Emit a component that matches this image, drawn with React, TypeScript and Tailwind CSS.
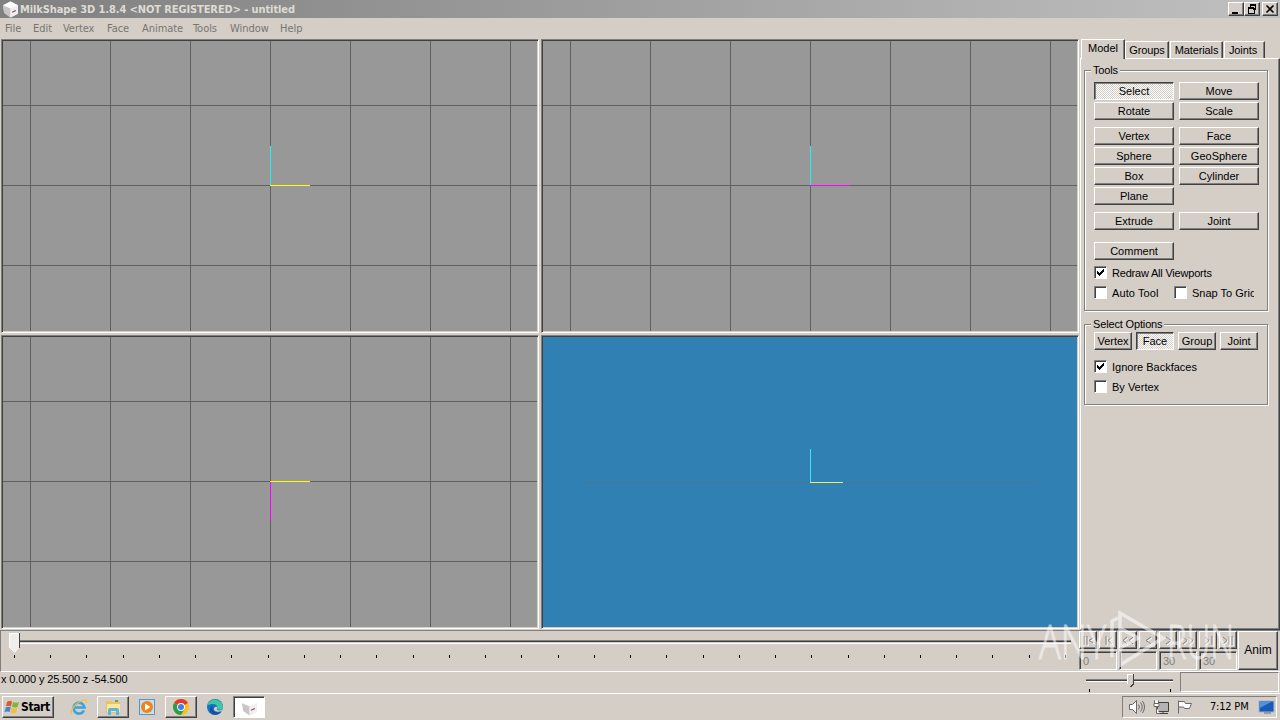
import type { ReactNode } from "react";
import clsx from "clsx";

const RAISED =
  "bg-[#d4cec7] border border-t-white border-l-white border-r-[#404040] border-b-[#404040] shadow-[inset_-1px_-1px_0_#808080]";
const PRESSED =
  "border border-t-[#404040] border-l-[#404040] border-r-white border-b-white shadow-[inset_1px_1px_0_#808080] bg-[repeating-conic-gradient(#ffffff_0_25%,#d4cec7_0_50%)] bg-[length:2px_2px]";
const SUNKEN =
  "border border-t-[#808080] border-l-[#808080] border-r-white border-b-white shadow-[inset_1px_1px_0_#404040]";

const MENUS = [
  { label: "File", width: "w-[28px]" },
  { label: "Edit", width: "w-[30px]" },
  { label: "Vertex", width: "w-[44px]" },
  { label: "Face", width: "w-[35px]" },
  { label: "Animate", width: "w-[51px]" },
  { label: "Tools", width: "w-[37px]" },
  { label: "Window", width: "w-[50px]" },
  { label: "Help", width: "w-[30px]" },
];

const TICKS = Array.from({ length: 30 }, (_, i) => Math.round(14 + i * 36.24));

interface ButtonProps {
  children: ReactNode;
  active?: boolean;
  className?: string;
}

function Button({ children, active, className }: ButtonProps) {
  return (
    <button
      className={clsx(
        "h-[18px] flex items-center justify-center leading-none whitespace-nowrap",
        active ? PRESSED : RAISED,
        className ?? "w-20"
      )}
    >
      {children}
    </button>
  );
}

function Checkbox({ label, checked, className }: { label: string; checked?: boolean; className?: string }) {
  return (
    <label className={clsx("h-[13px] flex items-center gap-[5px] whitespace-nowrap leading-[13px]", className)}>
      <span className={clsx("w-[13px] h-[13px] shrink-0 bg-white", SUNKEN)}>
        {checked && (
          <svg width="11" height="11" className="block" shapeRendering="crispEdges">
            <path d="M2 4v3M3 5v3M4 6v3M5 5v3M6 4v3M7 3v3M8 2v3" stroke="#000" transform="translate(.5 0)" />
          </svg>
        )}
      </span>
      <span className="overflow-hidden mt-[2px]">{label}</span>
    </label>
  );
}

function Group({ title, className, children }: { title: string; className: string; children: ReactNode }) {
  return (
    <section
      className={clsx(
        "relative w-[184px] border border-[#808080] shadow-[1px_1px_0_#fff,inset_1px_1px_0_#fff] pl-[9px]",
        className
      )}
    >
      <span className="absolute left-[6px] top-[-7px] bg-[#d4cec7] px-[2px] leading-[13px] tracking-[-0.15px]">
        {title}
      </span>
      {children}
    </section>
  );
}

interface ViewportProps {
  vx: number;
  hy: number;
  up?: string;
  down?: string;
  right: string;
}

// Orthographic view: 80px grid with the axis cross on the middle lines
function Viewport({ vx, hy, up, down, right }: ViewportProps) {
  const cols = [0, 1, 2, 3, 4, 5, 6].map((i) => vx - 240 + i * 80);
  const rows = [-80, 0, 80].map((d) => hy + d);
  return (
    <div className={clsx("p-px", SUNKEN)}>
      <svg width="534" height="290" className="block bg-[#989898]" shapeRendering="crispEdges">
        {cols.map((x) => (
          <rect key={x} x={x} y="0" width="1" height="290" fill="#606060" />
        ))}
        {rows.map((y) => (
          <rect key={y} x="0" y={y} width="534" height="1" fill="#606060" />
        ))}
        {up && <rect x={vx} y={hy - 39} width="1" height="40" fill={up} />}
        {down && <rect x={vx} y={hy} width="1" height="40" fill={down} />}
        <rect x={vx} y={hy} width="40" height="1" fill={right} />
      </svg>
    </div>
  );
}

function Cube({ size }: { size: number }) {
  return (
    <svg width={size} height={size} viewBox="0 0 16 16">
      <path d="M1 4 8 .5 15 4v8l-7 3.500L2 11z" fill="#eee" />
      <path d="M1 4 8 .5 15 4 8 7z" fill="#fff" />
      <path d="M1 4 8 7v8.500L2 11z" fill="#c9c4c6" />
      <path d="M8 7l7-3v8l-7 3.500z" fill="#f4edf0" />
      <path d="M9.500 10.500 13 9" stroke="#66505a" />
    </svg>
  );
}

function TitleBar() {
  return (
    <header className="h-[18px] flex items-center pl-[2px] pr-[2px] bg-linear-to-r from-[#808080] to-[#c0c0c0]">
      <Cube size={17} />
      <h1 className="flex-1 pl-px pt-px font-['DejaVu_Sans_Condensed'] font-bold text-[11px] leading-[18px] tracking-[-0.1px] text-[#dedbd5] whitespace-nowrap">
        MilkShape 3D 1.8.4 &lt;NOT REGISTERED&gt; - untitled
      </h1>
      <div className="flex">
        <Button className="w-4 h-[14px]!">
          <svg width="12" height="12" shapeRendering="crispEdges">
            <rect x="2" y="9" width="6" height="2" />
          </svg>
        </Button>
        <Button className="w-4 h-[14px]! mr-[2px]">
          <svg width="12" height="12" fill="none" stroke="#000" shapeRendering="crispEdges">
            <path d="M4 1.500h6M4.500 1v4M9.500 1v6M7 6.500h3M4 2.500h6M2 5.500h6v5h-5.500v-5M2 4.500h6" />
          </svg>
        </Button>
        <Button className="w-4 h-[14px]!">
          <svg width="12" height="12">
            <path d="M2.500 2.500l7 7M9.500 2.500l-7 7" stroke="#000" strokeWidth="1.600" />
          </svg>
        </Button>
      </div>
    </header>
  );
}

function Panel() {
  const tab =
    "h-[17px] border-t border-l border-t-white border-l-white border-r border-r-[#404040] shadow-[inset_-1px_0_0_#808080] text-center leading-[17px] tracking-[-0.1px]";
  return (
    <aside className="w-[200px] h-[591px] ml-px flex flex-col">
      <nav className="flex items-end h-[19px] pl-px">
        <div className="relative z-10 w-[44px] h-5 -mb-px bg-[#d4cec7] border-t border-l border-white border-r border-r-[#404040] shadow-[inset_-1px_0_0_#808080] text-center leading-[17px]">
          Model
        </div>
        <div className={clsx(tab, "w-[44px]")}>Groups</div>
        <div className={clsx(tab, "w-[53px] ml-px")}>Materials</div>
        <div className={clsx(tab, "w-[41px] ml-px pr-[3px]")}>Joints</div>
      </nav>
      <div className="flex-1 border border-white border-r-[#404040] border-b-[#404040] shadow-[inset_-1px_-1px_0_#808080] pt-[11px] pl-[3px]">
        <Group title="Tools" className="h-[241px] pt-[11px]">
          <div className="grid grid-cols-[80px_80px] gap-x-[5px] gap-y-[2px]">
            <Button active>Select</Button>
            <Button>Move</Button>
            <Button>Rotate</Button>
            <Button>Scale</Button>
          </div>
          <div className="grid grid-cols-[80px_80px] gap-x-[5px] gap-y-[2px] mt-[7px]">
            <Button>Vertex</Button>
            <Button>Face</Button>
            <Button>Sphere</Button>
            <Button>GeoSphere</Button>
            <Button>Box</Button>
            <Button>Cylinder</Button>
            <Button>Plane</Button>
          </div>
          <div className="flex gap-[5px] mt-[7px]">
            <Button>Extrude</Button>
            <Button>Joint</Button>
          </div>
          <div className="mt-3">
            <Button>Comment</Button>
          </div>
          <Checkbox label="Redraw All Viewports" checked className="mt-[6px] tracking-[-0.2px]" />
          <div className="flex mt-[7px]">
            <Checkbox label="Auto Tool" className="w-20 tracking-[0.1px]" />
            <Checkbox label="Snap To Gric" className="w-20" />
          </div>
        </Group>
        <Group title="Select Options" className="h-[81px] mt-[13px] pt-[7px]">
          <div className="flex gap-1">
            <Button className="w-[38px]">Vertex</Button>
            <Button active className="w-[38px]">Face</Button>
            <Button className="w-[38px]">Group</Button>
            <Button className="w-[38px]">Joint</Button>
          </div>
          <Checkbox label="Ignore Backfaces" checked className="mt-[10px]" />
          <Checkbox label="By Vertex" className="mt-[7px]" />
        </Group>
      </div>
    </aside>
  );
}

function Timeline() {
  const playback = [
    "M4 3v9M7 3v9M13 5l-4 2.500 4 2.500",
    "M6 3v9M12 4L8 7.500l4 3.500",
    "M7 4L3 7.500 7 11M13 4L9 7.500l4 3.500",
    "M11 4L6 7.500l5 3.500",
    "M6 4l5 3.500L6 11",
    "M3 4l4 3.500L3 11M9 4l4 3.500L9 11",
    "M5 4l4 3.500L5 11M12 3v9",
    "M3 4l4 3.500L3 11M9 3v9M12 3v9",
  ];
  return (
    <div className="h-[42px] flex border-t border-l border-[#808080] border-b border-b-white">
      <svg width="1078" height="40" shapeRendering="crispEdges">
        <g transform="translate(-1 -631)">
          <rect x="12" y="640" width="1059" height="1" fill="#808080" />
          <rect x="12" y="641" width="1059" height="1" fill="#404040" />
          <rect x="12" y="643" width="1059" height="1" fill="#fff" />
          {TICKS.map((x) => (
            <rect key={x} x={x} y="655" width="1" height="3" />
          ))}
          <path d="M9 633h10v15l-5 5-5-5z" fill="#f0eeea" />
          <path d="M9.500 648v-14.500h10" stroke="#fff" fill="none" />
          <path d="M19.500 633v15" stroke="#404040" fill="none" />
        </g>
      </svg>
      <div className="w-[158px]">
        <div className="flex gap-[2px]">
          {playback.map((d) => (
            <Button key={d} className="w-[18px] shrink-0">
              <svg width="16" height="15">
                <path d={d} transform="translate(1 1)" stroke="#fff" fill="none" />
                <path d={d} stroke="#808080" fill="none" />
              </svg>
            </Button>
          ))}
        </div>
        <div className="flex gap-[2px] mt-[2px] text-[#808080]">
          {["0", "", "30", "30"].map((value, i) => (
            <div key={i} className={clsx("w-[38px] h-[19px] pl-[3px] leading-[18px]", SUNKEN)}>
              {value}
            </div>
          ))}
        </div>
      </div>
      <Button className="w-10 h-[39px]! ml-px text-[12px] pb-px">Anim</Button>
    </div>
  );
}

function StatusBar() {
  return (
    <div className="h-[21px] flex">
      <p className="w-[1079px] pl-px leading-[14px] tracking-[-0.15px]">x 0.000 y 25.500 z -54.500</p>
      <svg width="101" height="21" shapeRendering="crispEdges">
        <rect x="7" y="7" width="87" height="1" fill="#808080" />
        <rect x="7" y="8" width="87" height="1" fill="#404040" />
        <rect x="7" y="9" width="87" height="1" fill="#fff" />
        <path d="M48 2h6v10l-3 3-3-3z" fill="#d4cec7" />
        <path d="M48.500 12V2.500h5" stroke="#fff" fill="none" />
        <path d="M54.500 2v10l-3 3" stroke="#404040" fill="none" />
        <rect x="10" y="17" width="1" height="3" />
        <rect x="91" y="17" width="1" height="3" />
      </svg>
      <div className="w-[99px] h-[20px] border border-[#808080] border-r-white border-b-white" />
    </div>
  );
}

function TaskBar() {
  const slot = "w-8 h-[22px] flex items-center justify-center";
  return (
    <footer className="h-[27px] border-t border-white pt-[2px] pl-[2px] pr-[3px] flex">
      <div className={clsx("w-[52px] h-[22px] flex items-center pl-px", RAISED)}>
        <svg width="17" height="18" viewBox="0 0 17 18">
          <path d="M3 4q3-2 5-.5L7 8.500Q5 7 2 8.500z" fill="#e2562c" />
          <path d="M9 4q3 1.500 6 0l-1.500 5Q11 10 8 8.700z" fill="#78b83c" />
          <path d="M1.800 9.500q3-1.500 5-.2L5.500 14Q3.500 12.800.5 14z" fill="#3d86d0" />
          <path d="M7.800 9.800q3 1.200 5.500 0L12 14.500q-3 1-5.500 0z" fill="#f5bf2c" />
        </svg>
        <span className="font-['DejaVu_Sans_Condensed'] font-bold text-[12px] leading-none tracking-[-0.4px]">Start</span>
      </div>
      <div className={clsx(slot, "ml-[9px]")}>
        <svg width="18" height="18" viewBox="0 0 18 18" fill="none">
          <path d="M14 12.500A5.500 5.500 0 1 1 14.500 9.500H5" stroke="#3aa3e3" strokeWidth="2.600" />
          <path d="M2 16C-1 13 6 5 12 2.500c4-1.500 5 0 4 2.500" stroke="#efc33c" strokeWidth="1.300" />
        </svg>
      </div>
      <div className={clsx(slot, "ml-[2px]", RAISED)}>
        <svg width="18" height="18" viewBox="0 0 18 18">
          <path d="M2 3h5l1 1h8v11H2z" fill="#e7c565" />
          <path d="M3 6h13v8H3z" fill="#f7e7a0" />
          <path d="M4 17v-5q0-2 2-2h7q2 0 2 2v5h-3v-4H7v4z" fill="#5fb4df" />
          <rect x="11" y="2" width="3" height="2" fill="#57a857" />
        </svg>
      </div>
      <div className={clsx(slot, "ml-[2px]")}>
        <svg width="17" height="17" viewBox="0 0 17 17">
          <rect x=".5" y=".5" width="15" height="15" fill="#c5dff2" stroke="#5b95c8" />
          <circle cx="8" cy="8" r="6" fill="#f08418" />
          <path d="M6 4.500 11.500 8 6 11.500z" fill="#fff" />
        </svg>
      </div>
      <div className={clsx(slot, "ml-[2px]", RAISED)}>
        <svg width="16" height="16" viewBox="0 0 16 16">
          <circle cx="8" cy="8" r="8" fill="#fbc116" />
          <path d="M8 8 1.070 4A8 8 0 0 1 14.930 4z" fill="#e33b2e" />
          <path d="M8 8 1.070 4A8 8 0 0 0 8 16l3.500-6z" fill="#2a9f4b" />
          <circle cx="8" cy="8" r="3.900" fill="#fff" />
          <circle cx="8" cy="8" r="3" fill="#3f7fe8" />
        </svg>
      </div>
      <div className={clsx(slot, "ml-[2px]")}>
        <svg width="16" height="16" viewBox="0 0 16 16">
          <circle cx="8" cy="8" r="8" fill="#1473c4" />
          <path d="M.3 6.500A8 8 0 0 1 16 8c0 3-4 3.500-6 2 2-4-3-7-9.700-3.500z" fill="#3fc6a4" />
          <path d="M6 7c-2 4 2 8 8 6-3 4-10 3.500-11-1-.5-3 1-5 3-5z" fill="#1c4f9e" />
          <path d="M8 8q2-1 2.300.7c0 1.200-1.300 1.300-.3 2 2 1.300 5 .8 6-1.200L15 12q-6 2-8-1-.5-2 1-3z" fill="#d4cec7" />
        </svg>
      </div>
      <div className={clsx(slot, "ml-[2px] bg-white", SUNKEN)}>
        <Cube size={17} />
      </div>
      <div className="ml-auto w-[155px] h-[22px] border border-[#808080] border-r-white border-b-white flex items-center pl-[5px]">
        <svg width="66" height="18" fill="#fff" stroke="#686868" className="shrink-0">
          <path d="M1.500 6.500h3l4-4v13l-4-4h-3z" />
          <path d="M10.500 6.500q2 2.500 0 5M12.500 4.500q3.500 4.500 0 9M14.500 3q4 6 0 12" fill="none" />
          <path d="M29.500 4.500h11v9h-11zM30 15.500h10M35 13v2" fill="#b4b4b4" stroke="#404040" />
          <path d="M26.500 2.500v3h4v-3M26 5.500h5v3h-5zM28.500 9v6.500h3" />
          <path d="M50.500 2.500v13M50.500 3.500h6l1 2h6l-2 5h-5l-1-1.500h-5" />
        </svg>
        <time className="ml-[16px] font-['DejaVu_Sans_Condensed'] text-[11px] tracking-[-0.2px] whitespace-nowrap">7:12 PM</time>
        <svg width="17" height="14" className="ml-auto mr-px shrink-0">
          <rect x="1" y="1" width="15" height="11" fill="#1c59b4" stroke="#9fb7cf" />
          <path d="M2 2h11L2 8z" fill="#4f93dd" />
          <path d="M6 13h7" stroke="#56708c" />
        </svg>
      </div>
    </footer>
  );
}

function Watermark() {
  return (
    <svg width="200" height="64" className="absolute left-[1036px] top-[606px] pointer-events-none opacity-55">
      <g fill="#fff" stroke="#fff" strokeWidth="1" fontFamily="'Open Sans', sans-serif" fontWeight="300" fontSize="48">
        <text x="3" y="53" textLength="67" lengthAdjust="spacingAndGlyphs">ANY</text>
        <text x="131" y="53" textLength="67" lengthAdjust="spacingAndGlyphs">RUN</text>
      </g>
      <path d="M76 51V15l6-3M84 7l43 25-43 27V42l18-10-18-10zM84 22v20" fill="none" stroke="#fff" strokeWidth="3.500" />
    </svg>
  );
}

export default function App() {
  return (
    <div className="relative w-[1280px] h-[720px] overflow-hidden bg-[#d4cec7] text-black text-[11px] font-['Liberation_Sans',sans-serif]">
      <TitleBar />
      <nav className="h-[21px] pl-[5px] flex font-['DejaVu_Sans_Condensed'] leading-[22px] text-[#777570] tracking-[-0.05px]">
        {MENUS.map((menu) => (
          <span key={menu.label} className={menu.width}>
            {menu.label}
          </span>
        ))}
      </nav>
      <main className="h-[591px] flex">
        <div className="w-[1079px] pl-px grid grid-cols-[538px_538px] grid-rows-[294px_294px] gap-[2px] content-start">
          <Viewport vx={267} hy={144} up="#20f0f0" right="#ffff00" />
          <Viewport vx={267} hy={144} up="#20f0f0" right="#ff00ff" />
          <Viewport vx={267} hy={144} down="#ff00ff" right="#ffff00" />
          <div className={clsx("p-px", SUNKEN)}>
            <svg width="534" height="290" className="block bg-[#3080b4]" shapeRendering="crispEdges">
              <rect x="40" y="145" width="456" height="1" fill="#4a7690" />
              <rect x="267" y="112" width="1" height="34" fill="#38e8f0" />
              <rect x="267" y="145" width="33" height="1" fill="#f0f050" />
            </svg>
          </div>
        </div>
        <Panel />
      </main>
      <Timeline />
      <StatusBar />
      <TaskBar />
      <Watermark />
    </div>
  );
}
